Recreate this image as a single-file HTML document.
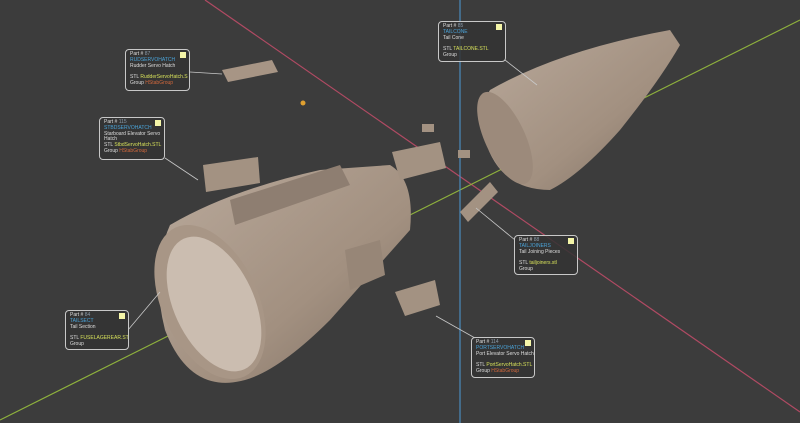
<!DOCTYPE html>
<html><head><meta charset="utf-8"><style>
html,body{margin:0;padding:0;background:#3c3c3c;width:800px;height:423px;overflow:hidden}
.l{position:absolute;border:1px solid #c8c8c8;border-radius:4px;background:rgba(50,50,50,.85);font-family:"Liberation Sans",sans-serif;font-size:5px;line-height:5.8px;color:#ddd;padding:2px 4px;box-sizing:border-box;white-space:nowrap;overflow:hidden}
.l .sq{position:absolute;right:3px;top:2px;width:6px;height:6px;background:#f4f5a8}
.b{color:#4aa3d8}.y{color:#d6e05a}.o{color:#d2683c}.g{color:#8a9aa8}
</style></head><body>
<svg width="800" height="423" style="position:absolute;left:0;top:0">
<line x1="205" y1="0" x2="800" y2="412" stroke="#b04a63" stroke-width="1.2"/>
<line x1="0" y1="420" x2="800" y2="20" stroke="#8fb23c" stroke-width="1.2"/>
<line x1="460" y1="0" x2="460" y2="423" stroke="#4a8bbf" stroke-width="1.2"/>
<defs><linearGradient id="g1" x1="0" y1="0" x2="1" y2="1"><stop offset="0" stop-color="#b9a99b"/><stop offset=".6" stop-color="#a29080"/><stop offset="1" stop-color="#7d6e62"/></linearGradient></defs>
<path d="M170 225 Q230 190 320 170 L390 165 Q415 180 410 230 L330 320 Q280 370 245 380 Q190 395 165 330 Q150 270 170 225Z" fill="url(#g1)"/>
<ellipse cx="210" cy="302" rx="48" ry="82" transform="rotate(-25 210 302)" fill="#a89686"/>
<ellipse cx="214" cy="304" rx="40" ry="72" transform="rotate(-25 214 304)" fill="#cbbdb0"/>
<path d="M230 200 L340 165 L350 185 L235 225Z" fill="#8e7e71"/>
<path d="M345 250 L380 240 L385 275 L350 290Z" fill="#978677"/>
<path d="M490 90 Q560 50 670 30 L680 45 Q660 80 620 130 Q580 175 550 190 Q500 190 485 140 Q478 110 490 90Z" fill="url(#g1)"/>
<ellipse cx="505" cy="138" rx="20" ry="50" transform="rotate(-25 505 138)" fill="#9c8a7b"/>
<path d="M222 70 L272 60 L278 72 L228 82Z" fill="#a79585"/>
<path d="M203 165 L258 157 L260 183 L206 192Z" fill="#a39282"/>
<path d="M392 152 L440 142 L446 168 L400 180Z" fill="#a39282"/>
<path d="M395 292 L435 280 L440 305 L405 316Z" fill="#a39282"/>
<path d="M460 212 L490 182 L498 192 L468 222Z" fill="#a39282"/>
<rect x="422" y="124" width="12" height="8" fill="#a39282"/>
<rect x="458" y="150" width="12" height="8" fill="#a39282"/>
<circle cx="303" cy="103" r="2.5" fill="#e0a030"/>
<g stroke="#c8c8c8" stroke-width="0.8" fill="none">
<line x1="190" y1="72" x2="222" y2="74"/><line x1="165" y1="158" x2="198" y2="180"/>
<line x1="128" y1="330" x2="160" y2="292"/><line x1="505" y1="60" x2="537" y2="85"/>
<line x1="476" y1="208" x2="515" y2="240"/><line x1="436" y1="316" x2="475" y2="338"/>
</g>
</svg>
<div class="l" style="left:125px;top:49px;width:65px;height:42px"><div class="sq"></div>Part # <span class="g">87</span><br><span class="b">RUDSERVOHATCH</span><br>Rudder Servo Hatch<br><br>STL <span class="y">RudderServoHatch.S</span><br>Group <span class="o">HStabGroup</span></div>
<div class="l" style="left:99px;top:117px;width:66px;height:43px"><div class="sq"></div>Part # <span class="g">115</span><br><span class="b">STBDSERVOHATCH</span><br>Starboard Elevator Servo<br>Hatch<br>STL <span class="y">StbdServoHatch.STL</span><br>Group <span class="o">HStabGroup</span></div>
<div class="l" style="left:438px;top:21px;width:68px;height:41px"><div class="sq"></div>Part # <span class="g">85</span><br><span class="b">TAILCONE</span><br>Tail Cone<br><br>STL <span class="y">TAILCONE.STL</span><br>Group</div>
<div class="l" style="left:65px;top:310px;width:64px;height:40px"><div class="sq"></div>Part # <span class="g">84</span><br><span class="b">TAILSECT</span><br>Tail Section<br><br>STL <span class="y">FUSELAGEREAR.STL</span><br>Group</div>
<div class="l" style="left:514px;top:235px;width:64px;height:40px"><div class="sq"></div>Part # <span class="g">88</span><br><span class="b">TAILJOINERS</span><br>Tail Joining Pieces<br><br>STL <span class="y">tailjoiners.stl</span><br>Group</div>
<div class="l" style="left:471px;top:337px;width:64px;height:41px"><div class="sq"></div>Part # <span class="g">114</span><br><span class="b">PORTSERVOHATCH</span><br>Port Elevator Servo Hatch<br><br>STL <span class="y">PortServoHatch.STL</span><br>Group <span class="o">HStabGroup</span></div>
</body></html>
